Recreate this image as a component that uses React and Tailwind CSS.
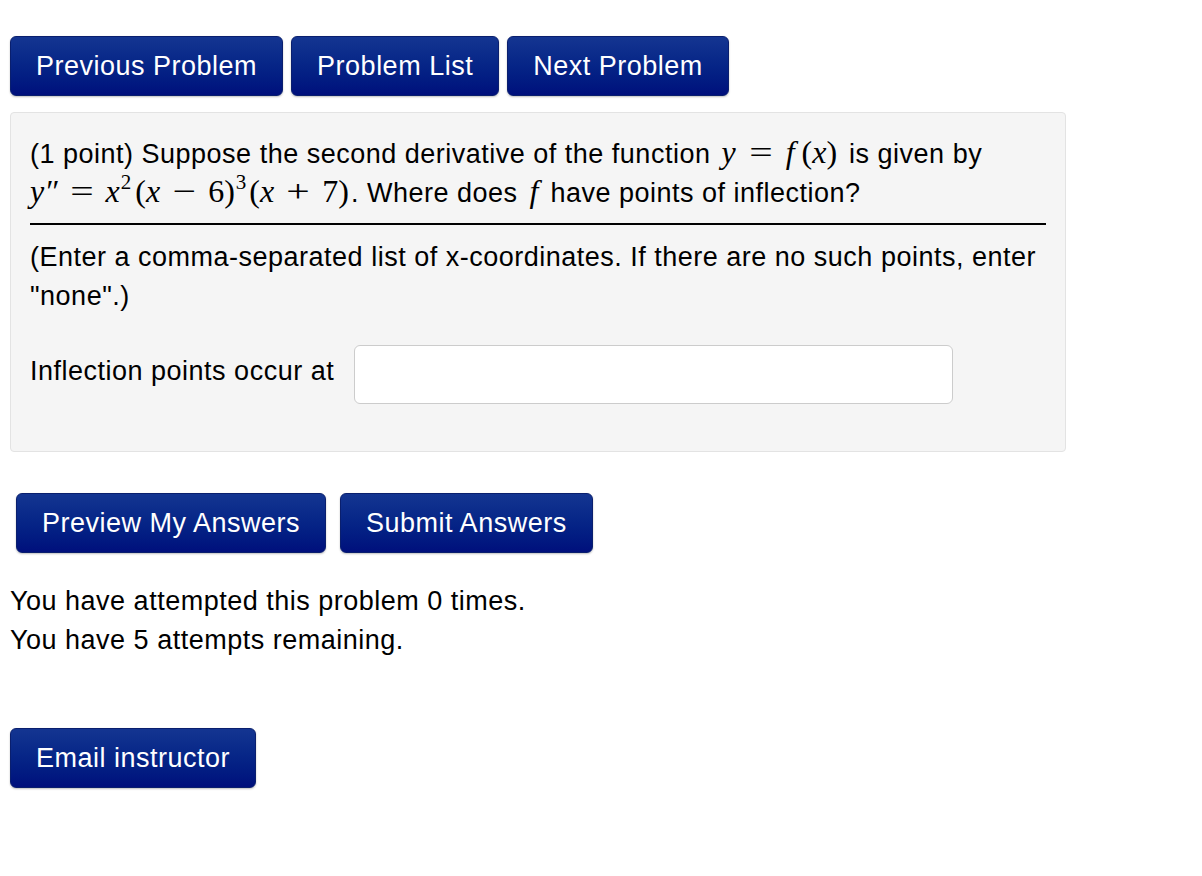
import React from 'react';

const btn =
  'h-[60px] px-[25px] rounded-[6px] bg-gradient-to-b from-[#143591] to-[#000f7c] text-white text-[27px] tracking-[0.5px] leading-none shadow-[0_1px_2px_rgba(0,0,0,0.25)] border border-[#0a1f6e] cursor-pointer';

const serif = { fontFamily: '"Liberation Serif", "DejaVu Serif", serif' };

function M({ children, cls = '' }) {
  return (
    <span className={'italic text-[32px] leading-[1] tracking-normal ' + cls} style={serif}>
      {children}
    </span>
  );
}

function R({ children, cls = '' }) {
  return (
    <span className={'not-italic text-[32px] leading-[1] tracking-normal ' + cls} style={serif}>
      {children}
    </span>
  );
}

// wide operator, like the math renderer draws it
function Op({ children, cls = '' }) {
  return (
    <span className={'inline-block not-italic text-[32px] leading-[1] tracking-normal scale-x-[1.3] ' + cls} style={serif}>
      {children}
    </span>
  );
}

function Sup({ children }) {
  return (
    <sup className="text-[21px] leading-[1] tracking-normal top-[-0.6em] ml-[1px]" style={serif}>
      {children}
    </sup>
  );
}

export default function App() {
  return (
    <div className="bg-white min-h-[876px] pl-[10px] pt-[36px] text-black text-[27px] tracking-[0.5px] leading-[39px]" style={{ fontFamily: '"Liberation Sans", Arial, sans-serif' }}>
      <div className="flex gap-[8px]">
        <button className={btn}>Previous Problem</button>
        <button className={btn}>Problem List</button>
        <button className={btn}>Next Problem</button>
      </div>

      <div className="mt-[16px] w-[1056px] bg-[#f5f5f5] border border-[#e3e3e3] rounded-[4px] px-[19px] pt-[22px] pb-[47px]">
        <p className="leading-[39px]">
          (1 point) Suppose the second derivative of the function <M cls="ml-[3px]">y</M>
          <Op cls="mx-[16px]">=</Op>
          <M>f</M>
          <R cls="ml-[7px]">(</R>
          <M>x</M>
          <R>)</R>
          <span className="ml-[12px]">is given by</span>
          <br />
          <M>y″</M>
          <Op cls="mx-[15px]">=</Op>
          <M>x</M>
          <Sup>2</Sup>
          <R cls="ml-[4px]">(</R>
          <M>x</M>
          <Op cls="mx-[15px]">−</Op>
          <R>6)</R>
          <Sup>3</Sup>
          <R cls="ml-[3px]">(</R>
          <M>x</M>
          <Op cls="mx-[15px]">+</Op>
          <R>7)</R>
          <span className="ml-[2px]">. Where does</span> <M cls="mx-[4px]">f</M> have points of inflection?
        </p>
        <hr className="border-0 h-[2px] bg-black mt-[10px] mb-[13px]" />
        <p>(Enter a comma-separated list of x-coordinates. If there are no such points, enter "none".)</p>
        <div className="mt-[29px] flex items-center gap-[20px]">
          <span className="relative top-[-3px]">Inflection points occur at</span>
          <input
            type="text"
            className="w-[599px] h-[59px] bg-white border border-[#cccccc] rounded-[6px] px-3 text-[26px] outline-none"
          />
        </div>
      </div>

      <div className="mt-[41px] ml-[6px] flex gap-[14px]">
        <button className={btn}>Preview My Answers</button>
        <button className={btn}>Submit Answers</button>
      </div>

      <div className="mt-[29px]">
        <div>You have attempted this problem 0 times.</div>
        <div>You have 5 attempts remaining.</div>
      </div>

      <div className="mt-[68px]">
        <button className={btn}>Email instructor</button>
      </div>
    </div>
  );
}
